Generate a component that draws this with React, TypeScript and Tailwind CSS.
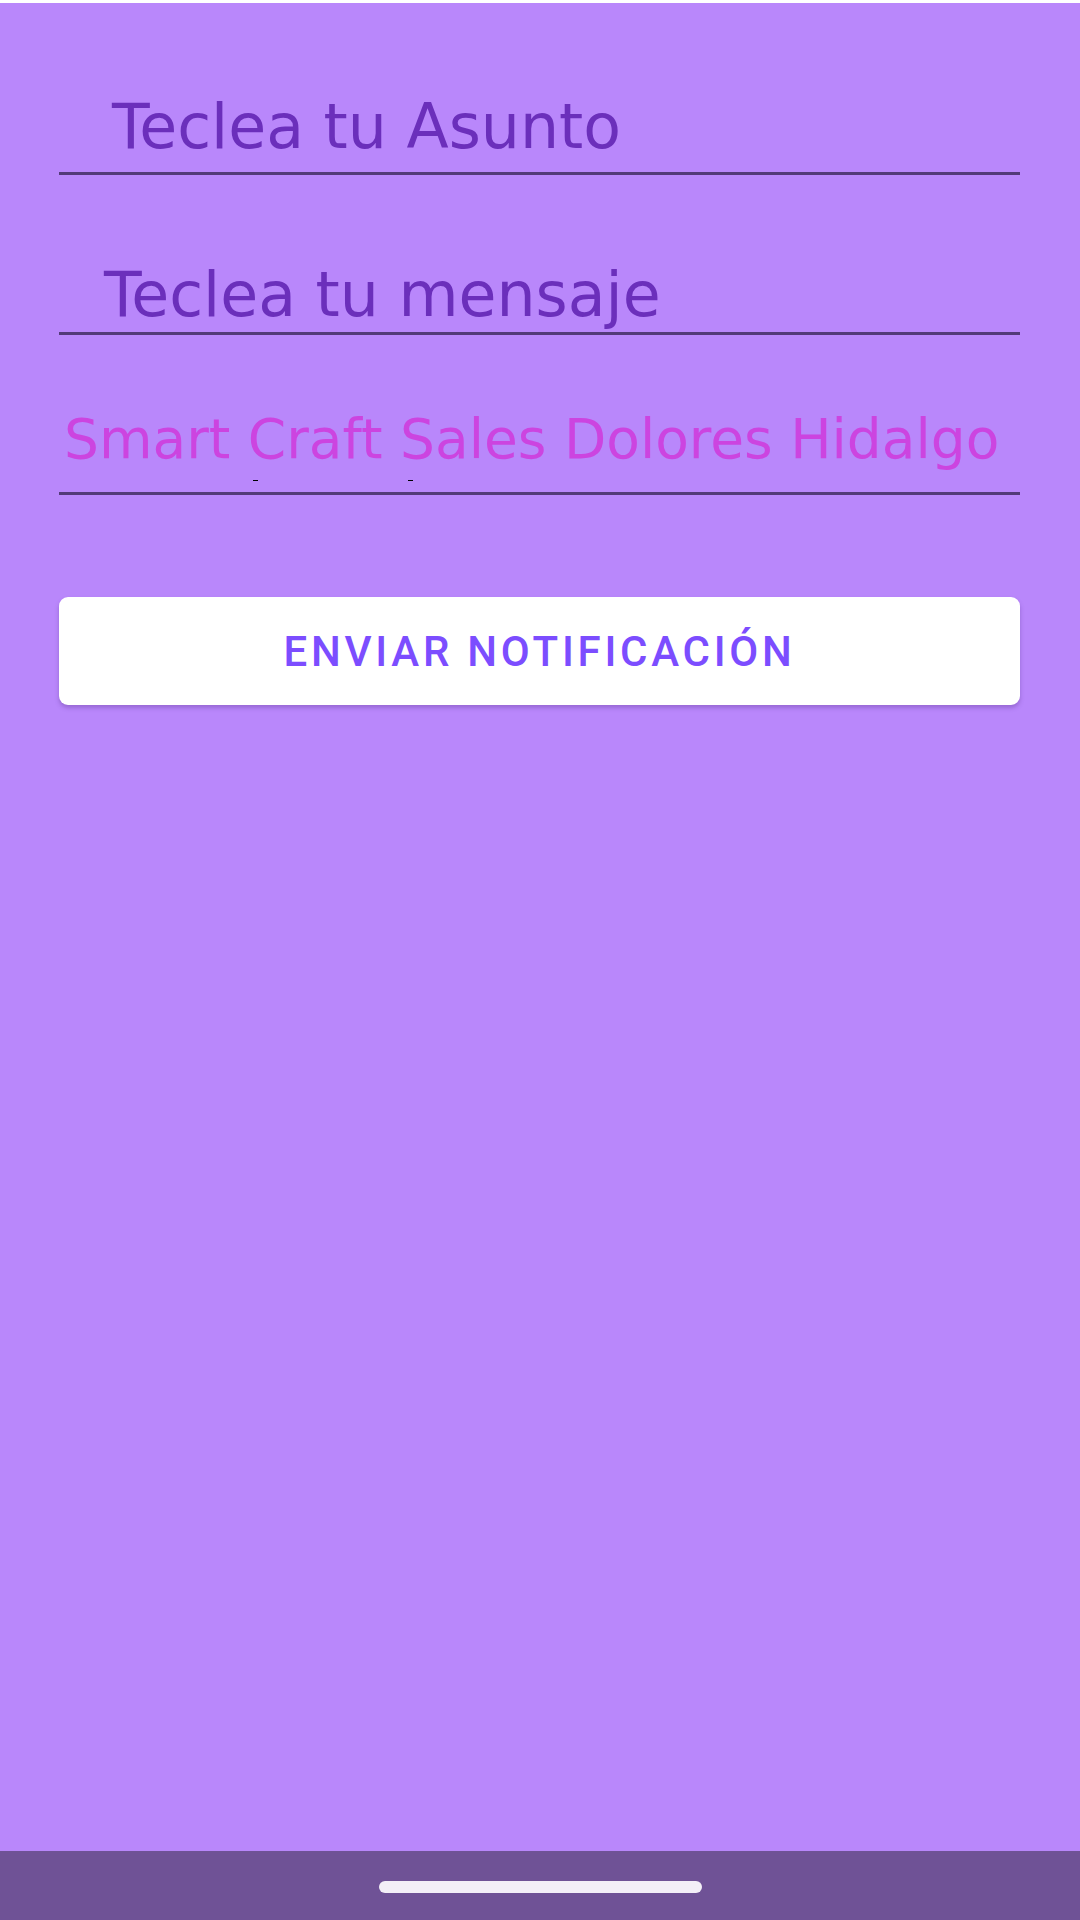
const fieldFont = { fontFamily: '"DejaVu Sans", sans-serif' };

const Field = ({
  text,
  className,
  textClass,
  children,
}: {
  text: string;
  className: string;
  textClass: string;
  children?: React.ReactNode;
}) => (
  <div className={`relative border-b-[3px] border-[#533a78] ${className}`}>
    <div className={`whitespace-nowrap ${textClass}`} style={fieldFont}>
      {text}
    </div>
    {children}
  </div>
);

export default function App() {
  return (
    <div className="h-screen w-full flex flex-col bg-[#b987fb]">
      <div className="h-[3px] w-full bg-white" />
      <main className="flex-1 flex flex-col pl-[59px] pr-[60px] pt-[88px]">
        <Field
          text="Teclea tu Asunto"
          className="pb-[9px] pl-[53px]"
          textClass="text-[61.7px] leading-[72px] text-[#6b2fbb]"
        />
        <Field
          text="Teclea tu mensaje"
          className="mt-[84px] pb-[1px] pl-[45px]"
          textClass="text-[61.7px] leading-[72px] text-[#6b2fbb]"
        />
        <Field
          text="Smart Craft Sales Dolores Hidalgo"
          className="mt-[72px] pb-[21px] pl-[5px]"
          textClass="text-[55px] leading-[64px] text-[#cc44e0]"
        >
          <span className="absolute left-[194px] top-[73px] h-px w-[5px] bg-black" />
          <span className="absolute left-[349px] top-[73px] h-px w-[5px] bg-black" />
        </Field>
        <button className="mt-[102px] h-[108px] w-full rounded-[9px] bg-white shadow-[0_3px_4px_rgba(90,50,140,0.35)] flex items-center justify-center font-['Roboto',sans-serif] font-medium text-[42px] tracking-[3.75px] text-[#7c4dff]">
          ENVIAR NOTIFICACIÓN
        </button>
      </main>
      <div className="h-[69px] w-full bg-[#6f5296] flex justify-center pt-[30px]">
        <div className="h-[12px] w-[323px] rounded-full bg-[#f3eff7]" />
      </div>
    </div>
  );
}
